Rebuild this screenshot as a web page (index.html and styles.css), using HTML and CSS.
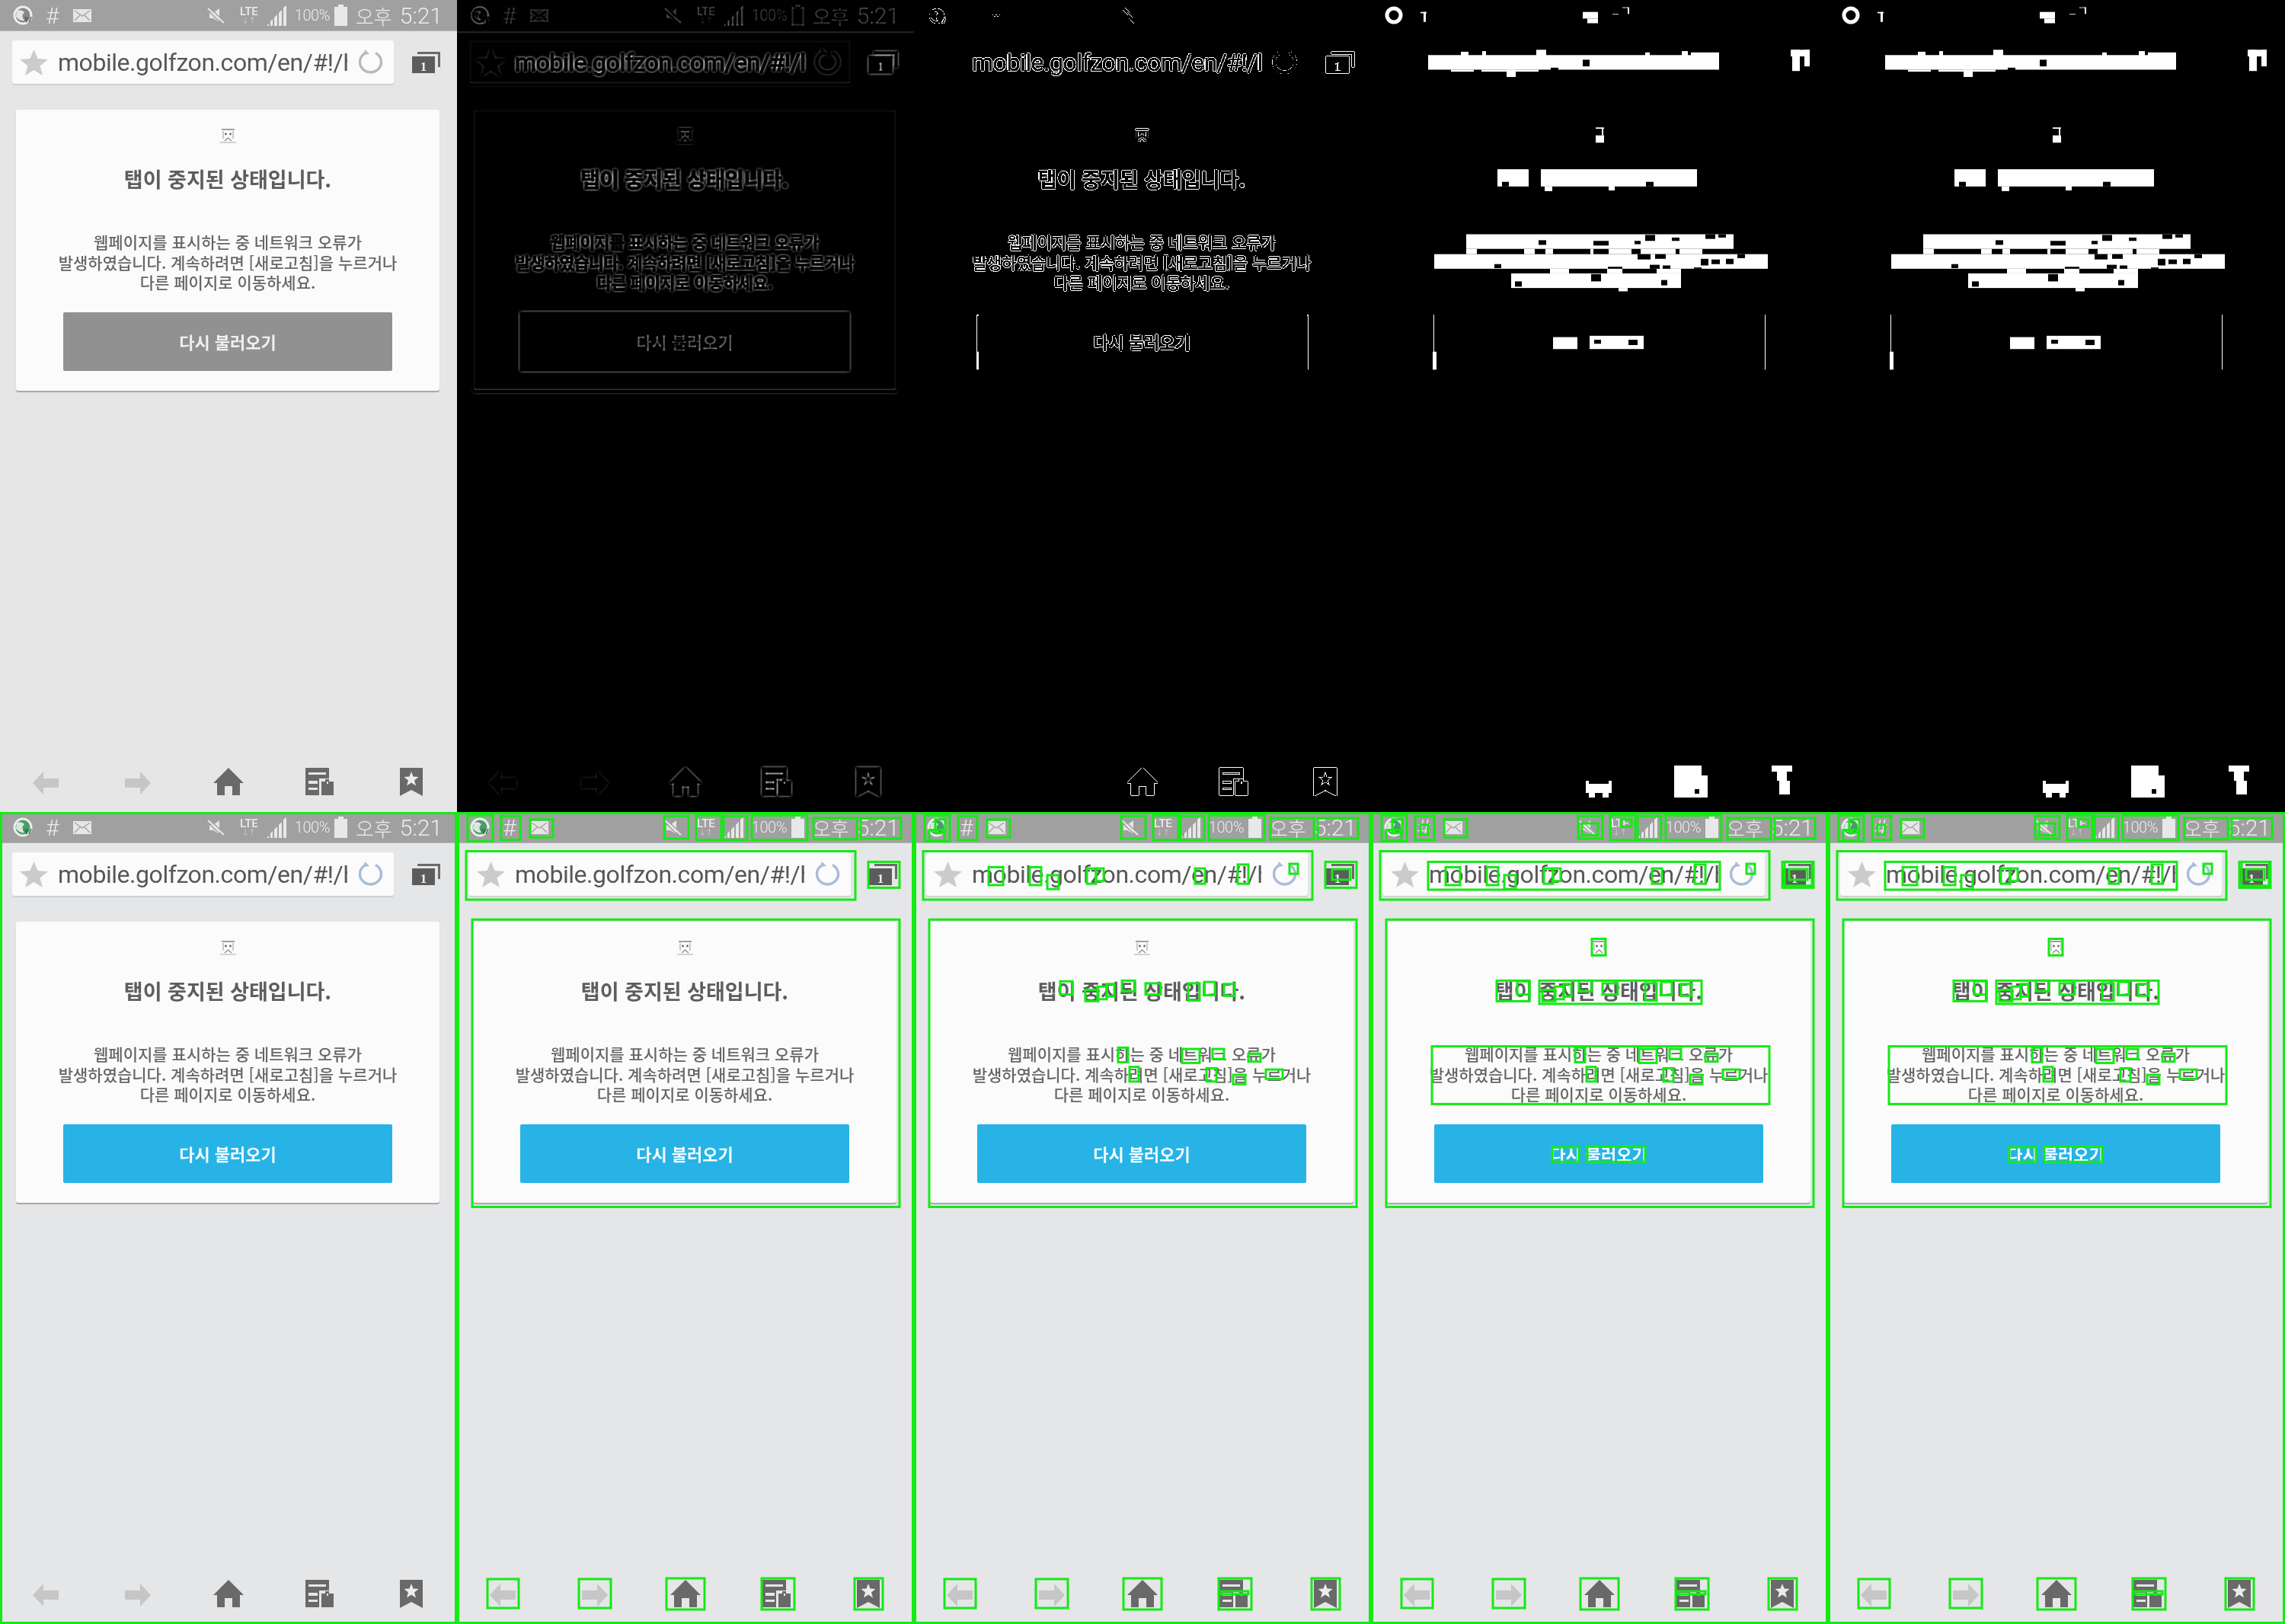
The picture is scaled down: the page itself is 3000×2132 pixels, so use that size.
FILE: index.html
```html
<!DOCTYPE html>
<html lang="ko">
<head>
	<meta charset="UTF-8">
	<title>Text detection steps</title>
	<link rel="stylesheet" href="styles.css">
</head>
<body>
	<!-- filters for the edge panels of the top row -->
	<svg class="defs" width="0" height="0">
		<filter id="edges" x="0" y="0" width="1" height="1" color-interpolation-filters="sRGB">
			<feColorMatrix type="saturate" values="0"/>
			<feGaussianBlur stdDeviation="0.8"/>
			<feConvolveMatrix order="3" kernelMatrix="-1 -1 -1 -1 8 -1 -1 -1 -1" preserveAlpha="true"/>
			<feComponentTransfer>
				<feFuncR type="linear" slope="1.2"/>
				<feFuncG type="linear" slope="1.2"/>
				<feFuncB type="linear" slope="1.2"/>
			</feComponentTransfer>
		</filter>
		<filter id="binary" x="0" y="0" width="1" height="1" color-interpolation-filters="sRGB">
			<feColorMatrix type="saturate" values="0"/>
			<feGaussianBlur stdDeviation="0.5"/>
			<feConvolveMatrix order="3" kernelMatrix="-1 -1 -1 -1 8 -1 -1 -1 -1" preserveAlpha="true"/>
			<feComponentTransfer>
				<feFuncR type="linear" slope="30" intercept="-17"/>
				<feFuncG type="linear" slope="30" intercept="-17"/>
				<feFuncB type="linear" slope="30" intercept="-17"/>
			</feComponentTransfer>
		</filter>
	</svg>

	<template id="screen-tpl">
		<div class="screen">
			<div class="status">
				<svg class="globe" width="26" height="26" viewBox="0 0 26 26">
					<circle cx="13" cy="13" r="11" fill="#4a9d68" stroke="#e8f0ea" stroke-width="3"/>
					<path d="M5 7Q12 5 15 9 10 14 15 20 9 21 4 15Z" fill="#d8e8dc"/>
					<path d="M16 15l2 6 2-6M24 15l-3 7" fill="none" stroke="#2d6b45" stroke-width="1.500"/>
				</svg>
				<span class="hash">#</span>
				<svg class="mail" width="24" height="17" viewBox="0 0 24 17">
					<rect width="24" height="17" fill="#e6e6e6"/>
					<path d="M2 2l10 7 10-7M2 15l7-7M22 15l-7-7" fill="none" stroke="#a8a8a8" stroke-width="1.500"/>
				</svg>
				<div class="status-right">
					<svg class="mute" width="24" height="21" viewBox="0 0 24 21">
						<path d="M3 7h5l8-6v18l-8-5H3z" fill="#e6e6e6"/>
						<path d="M0 3l19 18M3 0l19 18" stroke="#a0a0a0" stroke-width="1.500"/>
						<path d="M1 1l21 19" stroke="#e6e6e6" stroke-width="2"/>
					</svg>
					<div class="lte"><span>LTE</span><small>↓↑</small></div>
					<svg class="signal" width="26" height="27" viewBox="0 0 26 27">
						<path d="M0 27l3-3v3zM5 27v-6l3-3v9zM10 27V16l4-4v15zM16 27V10l4-4v21zM22 27V3l4-3v27z" fill="#e8e8e8"/>
					</svg>
					<span class="pct">100%</span>
					<svg class="battery" width="17" height="28" viewBox="0 0 17 28">
						<path d="M5 0h7v3h5v25H0V3h5z" fill="#e8e8e8"/>
					</svg>
					<span class="ampm">오후</span>
					<span class="clock">5:21</span>
				</div>
			</div>

			<div class="url-row">
				<div class="urlbar">
					<svg class="star" width="37" height="34" viewBox="0 0 37 34">
						<path d="M18.500 0l5 12 13.500 1-10.500 8.500 3.500 12.500-11.500-7-11.500 7 3.500-12.500L0 13l13.500-1z" fill="#cbcbcb"/>
					</svg>
					<span class="url">mobile.golfzon.com/en/#!/h</span>
					<svg class="reload" width="34" height="33" viewBox="0 0 34 33">
						<path d="M22 4.500A14 13.500 0 1 1 9 4.500" fill="none" stroke="#a9bcd8" stroke-width="3.500"/>
						<path d="M8 0l6 6-8 1z" fill="#a9bcd8"/>
					</svg>
				</div>
				<svg class="tabs" width="37" height="28" viewBox="0 0 37 28">
					<path d="M7 3V0h30v20h-3V3z" fill="#6a6a6a"/>
					<rect y="6" width="30" height="22" fill="#5c5c5c"/>
					<text x="15" y="25" class="tabs-n">1</text>
				</svg>
			</div>

			<div class="card">
				<svg class="sad" width="21" height="19" viewBox="0 0 21 19">
					<path d="M2 1h17" fill="none" stroke="#777" stroke-width="1.400"/>
					<path d="M4 3v10M17 3v10M0 18h21" fill="none" stroke="#aaa" stroke-width="1.200"/>
					<circle cx="7.500" cy="7" r="1.400" fill="#666"/>
					<circle cx="13.500" cy="7" r="1.400" fill="#666"/>
					<path d="M6 16l4.500-4 4.500 4" fill="none" stroke="#888" stroke-width="1.200"/>
				</svg>
				<h1 class="title">탭이 중지된 상태입니다.</h1>
				<p class="msg">웹페이지를 표시하는 중 네트워크 오류가<br>발생하였습니다. 계속하려면 [새로고침]을 누르거나<br>다른 페이지로 이동하세요.</p>
				<div class="button">다시 불러오기</div>
			</div>

			<div class="nav">
				<svg width="41" height="38" viewBox="0 0 41 38"><path d="M3 19L17 4v9h20v12H17v9z" fill="#c6c6c6"/></svg>
				<svg width="41" height="38" viewBox="0 0 41 38"><path d="M38 19L24 4v9H4v12h20v9z" fill="#c6c6c6"/></svg>
				<svg width="50" height="41" viewBox="0 0 50 41"><path d="M25 2l20 20h-5v16H30V26H20v12H10V22H5z" fill="#696969"/></svg>
				<svg width="43" height="41" viewBox="0 0 43 41">
					<path d="M2 2h31v14H20v22H2z" fill="#696969"/>
					<path d="M6 8h23v3H6zM6 19h12v4H6zM6 28h12v3H6z" fill="#e6e6e6"/>
					<path d="M23 20h5v-3h5v3h6v18H23z" fill="#696969"/>
					<rect x="30" y="20" width="2" height="3" fill="#e6e6e6"/>
				</svg>
				<svg width="37" height="41" viewBox="0 0 37 41">
					<path d="M3 2h30v37L18 31 3 39z" fill="#696969"/>
					<path d="M18 7l2.500 6.500 7 .5-5.500 4.500 2 7-6-4-6 4 2-7L8.500 14l7-.5z" fill="#ececec"/>
				</svg>
			</div>
		</div>
	</template>

	<main class="grid">
		<section class="panel raw"></section>
		<section class="panel edges"></section>
		<section class="panel binary"></section>
		<section class="panel blobs"></section>
		<section class="panel blobs"></section>
		<section class="panel color"></section>
		<section class="panel color" data-boxes="regions"></section>
		<section class="panel color" data-boxes="regions glyphs"></section>
		<section class="panel color" data-boxes="regions glyphs lines"></section>
		<section class="panel color" data-boxes="regions glyphs lines"></section>
	</main>

	<script src="script.js"></script>
</body>
</html>
```

FILE: styles.css
```css
* { box-sizing: border-box; }

body {
	margin: 0;
	background: #000;
}
.defs { position: absolute; }

.grid {
	display: grid;
	grid-template-columns: repeat(5, 600px);
	grid-template-rows: repeat(2, 1066px);
}
.panel {
	position: relative;
	overflow: hidden;
	background: #000;
	--bg: #e5e6e8;
	--accent: #27b3e6;
	--btn-text: #f4fbfe;
}
.raw, .edges, .binary {
	--bg: #e6e6e6;
	--accent: #919191;
	--btn-text: #efefef;
}
.raw .screen { filter: grayscale(1) blur(0.7px); }
.color .screen { filter: blur(0.7px); }
.edges .screen { filter: url(#edges); }
.binary .screen { filter: url(#binary); }
.binary {
	--accent: transparent;
	--btn-text: #666;
}
/* low contrast parts fall under the threshold in the reference */
.binary .urlbar, .binary .card { box-shadow: none; }
.binary .status {
	border-bottom: 0;
	background: var(--bg);
}
.binary .star,
.binary .nav svg:nth-child(-n+2) { visibility: hidden; }
.overlay {
	position: absolute;
	left: 0;
	top: 0;
}
.overlay rect.box {
	fill: none;
	stroke: #14ea14;
	stroke-width: 3;
}

.screen {
	display: flex;
	flex-direction: column;
	height: 1066px;
	background: var(--bg);
	font-family: Roboto, "Noto Sans CJK KR", sans-serif;
}

/* status bar */
.status {
	display: flex;
	align-items: center;
	height: 41px;
	padding: 0 19px 0 17px;
	background: #a0a0a0;
	border-bottom: 1px solid #b4b4b4;
	color: #ececec;
}
.hash {
	margin-left: 17px;
	font-size: 30px;
	font-weight: 300;
	line-height: 41px;
}
.mail { margin-left: 19px; }
.status-right {
	display: flex;
	align-items: center;
	margin-left: auto;
}
.lte {
	display: flex;
	flex-direction: column;
	align-items: center;
	width: 28px;
	margin-left: 17px;
	font-size: 15px;
	font-weight: 500;
	line-height: 14px;
}
.lte small {
	font-size: 9px;
	line-height: 10px;
	color: #c8c8c8;
}
.signal { margin-left: 9px; }
.pct {
	margin-left: 11px;
	font-size: 20px;
	font-weight: 300;
	letter-spacing: -0.5px;
}
.battery { margin-left: 6px; }
.ampm {
	margin-left: 11px;
	font-family: "Noto Sans CJK KR", sans-serif;
	font-size: 26px;
	font-weight: 300;
	line-height: 41px;
}
.clock {
	margin-left: 10px;
	font-size: 30px;
	font-weight: 300;
}

/* address bar */
.url-row {
	display: flex;
	align-items: center;
	padding: 12px 0 0 16px;
}
.urlbar {
	display: flex;
	align-items: center;
	width: 501px;
	height: 57px;
	padding: 0 0 0 10px;
	background: #fbfbfb;
	border-radius: 3px;
	box-shadow: 0 2px 1px #d0d0d0;
}
.url {
	width: 380px;
	margin-left: 13px;
	overflow: hidden;
	white-space: nowrap;
	font-size: 32px;
	letter-spacing: -0.45px;
	color: #575757;
}
.reload { margin-left: 15px; }
.tabs { margin-left: 24px; }
.tabs-n {
	font-family: "Liberation Serif", serif;
	font-size: 17px;
	font-weight: 700;
	fill: #f0f0f0;
	text-anchor: middle;
}

/* error card */
.card {
	display: flex;
	flex-direction: column;
	align-items: center;
	width: 556px;
	height: 369px;
	margin: 34px 0 0 21px;
	padding-top: 25px;
	background: #fbfbfb;
	border-radius: 3px;
	box-shadow: 0 2px 1px #a6a6a6;
	font-family: "Noto Sans CJK KR", sans-serif;
}
.sad { display: block; }
.title {
	margin: 29px 0 0;
	font-size: 27px;
	font-weight: 700;
	line-height: 36px;
	color: #5e5e5e;
}
.msg {
	margin: 51px 0 0;
	font-size: 21px;
	font-weight: 500;
	line-height: 26.500px;
	text-align: center;
	white-space: nowrap;
	color: #666;
}
.button {
	display: flex;
	align-items: center;
	justify-content: center;
	width: 432px;
	height: 77px;
	margin-top: 26px;
	background: var(--accent);
	border-radius: 2px;
	font-size: 22px;
	font-weight: 700;
	color: var(--btn-text);
}

/* bottom toolbar */
.nav {
	display: grid;
	grid-template-columns: repeat(5, 120px);
	justify-items: center;
	align-items: end;
	margin-top: auto;
	padding-bottom: 19px;
}
.nav svg { display: block; }
```

FILE: script.js
```js
// rows above the toolbar were measured on crops stretched in y, SY brings them back
const SY = 0.8712;
const boxY = (y) => (y > 900 ? y : (y + 6) * SY - 6);
const blobY = (y) => (y > 900 ? y : y * SY);
const len = (y, h) => (y > 900 ? h : h * SY);

// detection boxes, [x, y, w, h] in panel pixels
const BOXES = {
	regions: [
		[14, 6, 33, 39], [58, 7, 25, 36], [96, 12, 30, 27],
		[272, 7, 32, 34], [314, 6, 33, 37], [350, 7, 31, 36], [387, 6, 73, 37], [468, 10, 57, 32], [530, 10, 53, 31],
		[12, 60, 511, 73], [540, 76, 41, 39], [20, 163, 561, 433],
		[40, 1007, 41, 38], [160, 1007, 42, 38], [275, 1006, 50, 41], [400, 1006, 43, 41], [522, 1006, 37, 41],
	],
	glyphs: [
		[28, 12, 13, 20], [20, 28, 20, 16],
		[98, 84, 19, 27], [152, 84, 15, 27], [175, 96, 15, 21], [227, 86, 12, 23], [239, 86, 10, 19],
		[369, 86, 13, 23], [425, 80, 14, 29], [493, 79, 11, 15], [549, 87, 24, 16],
		[192, 256, 16, 20], [225, 269, 17, 17], [241, 264, 12, 19], [253, 260, 10, 19], [273, 255, 17, 16],
		[304, 259, 20, 17], [360, 259, 15, 26], [381, 257, 14, 20], [407, 260, 14, 18],
		[268, 356, 13, 22], [352, 358, 23, 21], [392, 358, 15, 15], [439, 365, 16, 12],
		[283, 385, 12, 22], [384, 387, 13, 20], [419, 397, 16, 14], [462, 389, 22, 14],
		[403, 1023, 36, 4],
	],
	lines: [
		[65, 20, 10, 15], [277, 18, 21, 18], [328, 12, 14, 11],
		[75, 76, 383, 42], [543, 76, 36, 36],
		[290, 192, 18, 25], [165, 255, 43, 31], [221, 255, 213, 35],
		[80, 354, 443, 87], [238, 506, 35, 22], [284, 505, 76, 23],
	],
};

// white areas of the dilated panels, then the holes cut out of them
const BLOB_WHITE = [
	[75, 83, 382, 22], [118, 78, 10, 6], [146, 77, 5, 7], [217, 75, 13, 9], [360, 79, 6, 5], [408, 77, 8, 7], [420, 79, 37, 5],
	[178, 105, 12, 11], [105, 105, 30, 3], [145, 105, 75, 3],
	[551, 75, 25, 10], [569, 75, 7, 25], [553, 75, 10, 32],
	[295, 192, 11, 2], [303, 194, 2, 10], [295, 204, 11, 11],
	[166, 255, 41, 26], [223, 255, 205, 26], [228, 281, 10, 7], [312, 279, 8, 8],
	[125, 353, 351, 22], [83, 383, 438, 22], [184, 412, 223, 22], [325, 434, 12, 5],
	[125, 375, 14, 8], [201, 375, 14, 8], [229, 375, 10, 8], [288, 375, 4, 8], [312, 375, 30, 8], [354, 375, 46, 8], [405, 375, 30, 8],
	[235, 405, 25, 7], [375, 405, 32, 7], [310, 405, 20, 7],
	[239, 508, 32, 18], [287, 506, 71, 20],
	[82, 474, 1, 83], [517, 474, 1, 83], [81, 530, 5, 27],
	[278, 18, 20, 10], [284, 28, 14, 7], [65, 18, 8, 2], [69, 18, 3, 15], [330, 11, 8, 1], [337, 11, 2, 10], [317, 21, 8, 1],
	[282, 1029, 34, 12], [286, 1041, 8, 6], [304, 1041, 8, 6], [282, 1025, 4, 4], [312, 1025, 4, 4],
	[398, 1005, 36, 42], [434, 1018, 8, 29],
	[526, 1005, 27, 8], [533, 1013, 13, 12], [536, 1025, 14, 18],
];
const BLOB_HOLES = [
	[236, 102, 10, 6], [278, 90, 9, 10], [172, 274, 9, 7], [361, 274, 10, 7],
	[220, 362, 10, 7], [292, 363, 20, 7], [346, 363, 8, 5], [360, 354, 13, 9], [395, 358, 10, 5], [439, 353, 13, 7], [456, 353, 10, 5],
	[162, 398, 9, 6], [311, 402, 19, 3], [366, 399, 13, 6], [383, 400, 10, 5], [424, 403, 10, 2], [433, 390, 10, 10],
	[447, 391, 11, 7], [466, 390, 10, 8], [481, 383, 10, 6], [350, 383, 17, 8], [373, 383, 14, 7],
	[189, 424, 9, 8], [289, 413, 13, 11], [381, 422, 8, 8],
	[338, 512, 12, 8], [293, 512, 9, 6], [425, 1036, 6, 6],
];
// only the sides of the button survive the threshold
const BUTTON_SIDES = [[82, 474, 1, 83], [517, 474, 1, 83], [83, 530, 2, 27], [516, 474, 2, 2], [83, 474, 2, 2]];

const SVG_NS = 'http://www.w3.org/2000/svg';

function overlay(panel) {
	const svg = document.createElementNS(SVG_NS, 'svg');
	svg.setAttribute('class', 'overlay');
	svg.setAttribute('width', 600);
	svg.setAttribute('height', 1066);
	panel.append(svg);
	return svg;
}

function addRect(svg, [x, y, w, h], attrs) {
	const r = document.createElementNS(SVG_NS, 'rect');
	r.setAttribute('x', x);
	r.setAttribute('y', y);
	r.setAttribute('width', w);
	r.setAttribute('height', h);
	for (const k in attrs) r.setAttribute(k, attrs[k]);
	svg.append(r);
}

const tpl = document.getElementById('screen-tpl');

document.querySelectorAll('.panel').forEach((panel) => {
	if (panel.classList.contains('blobs')) {
		const svg = overlay(panel);
		svg.innerHTML = '<circle cx="30" cy="20" r="9" fill="none" stroke="#fff" stroke-width="5"/>';
		const scaled = ([x, y, w, h]) => [x, blobY(y), w, len(y, h)];
		BLOB_WHITE.forEach((b) => addRect(svg, scaled(b), { fill: '#fff' }));
		BLOB_HOLES.forEach((b) => addRect(svg, scaled(b), { fill: '#000' }));
		return;
	}
	panel.append(tpl.content.cloneNode(true));
	if (panel.classList.contains('binary')) {
		const svg = overlay(panel);
		BUTTON_SIDES.forEach(([x, y, w, h]) => addRect(svg, [x, blobY(y), w, h * SY], { fill: '#fff' }));
	}
	if (panel.classList.contains('color')) {
		const svg = overlay(panel);
		addRect(svg, [1.5, 1.5, 597, 1063], { class: 'box' });
		(panel.dataset.boxes || '').split(' ').filter(Boolean).forEach((set) => {
			BOXES[set].forEach(([x, y, w, h]) => addRect(svg, [x, boxY(y), w, len(y, h)], { class: 'box' }));
		});
	}
});
```
